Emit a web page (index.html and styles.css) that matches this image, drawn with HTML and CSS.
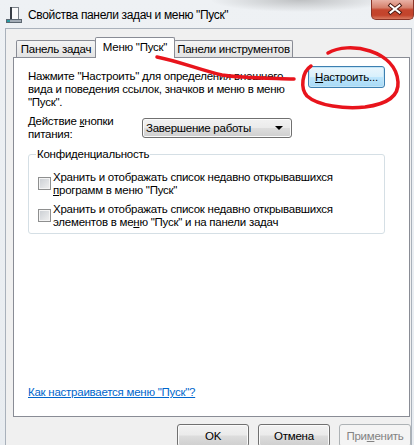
FILE: index.html
```html
<!DOCTYPE html>
<html>
<head>
    <title>Свойства панели задач и меню "Пуск"</title>
    <link rel="stylesheet" href="styles.css">
</head>
<body>
    <div class="window">
        <div class="titlebar">
            <svg class="app-icon" viewBox="0 0 16 16" width="16" height="16">
                <rect x="4.5" y="0.5" width="8" height="12" fill="#fbfbfb" stroke="#7c828a"/>
                <rect x="4" y="0" width="2" height="13" fill="#3a3f47"/>
                <rect x="0.5" y="12.5" width="15" height="3" fill="#a3acb6" stroke="#5d6771"/>
                <rect x="1" y="13" width="3" height="2" fill="#2a9aa3"/>
            </svg>
            <span class="title">Свойства панели задач и меню "Пуск"</span>
            <div class="close-btn">
                <svg viewBox="0 0 43 20" width="43" height="20">
                    <path d="M19.5 6.5 L28.5 13.5 M28.5 6.5 L19.5 13.5" stroke="#4b1a12" stroke-width="4" stroke-linecap="square"/>
                    <path d="M19.5 6.5 L28.5 13.5 M28.5 6.5 L19.5 13.5" stroke="#fff" stroke-width="2" stroke-linecap="square"/>
                </svg>
            </div>
        </div>

        <div class="client">
            <div class="tabs">
                <div class="tab">Панель задач</div>
                <div class="tab active">Меню "Пуск"</div>
                <div class="tab wide">Панели инструментов</div>
            </div>

            <div class="panel">
                <div class="intro">
                    <p class="intro-text">Нажмите "Настроить" для определения внешнего<br>вида и поведения ссылок, значков и меню в меню<br>"Пуск".</p>
                    <button class="btn btn-default"><u>Н</u>астроить...</button>
                </div>

                <div class="power">
                    <div class="power-label">Действие <u>к</u>нопки<br>питания:</div>
                    <div class="combo">
                        <span>Завершение работы</span>
                        <span class="arrow"></span>
                    </div>
                </div>

                <fieldset class="group">
                    <legend>Конфиденциальность</legend>
                    <div class="check">
                        <span class="box"></span>
                        <span>Хранить и отображать список недавно открывавшихся<br><u>п</u>рограмм в меню "Пуск"</span>
                    </div>
                    <div class="check">
                        <span class="box"></span>
                        <span>Хранить и отображать список недавно открывавшихся<br>элементов в ме<u>н</u>ю "Пуск" и на панели задач</span>
                    </div>
                </fieldset>

                <a class="help-link" href="#">Как настраивается меню "Пуск"?</a>
            </div>

            <div class="buttons">
                <button class="btn">OK</button>
                <button class="btn">Отмена</button>
                <button class="btn" disabled>При<u>м</u>енить</button>
            </div>
        </div>

        <!-- hand drawn red marks over the screenshot -->
        <svg class="scribble" viewBox="0 0 414 445" width="414" height="445">
            <path d="M157 57 C178 61 200 70 222 75 C240 78 262 78 294 79" fill="none" stroke="#e8141c" stroke-width="3.5" stroke-linecap="round"/>
            <path d="M328 53 C338 47 355 46 370 51 C385 56 397 66 398 82 C399 96 388 104 365 107 C345 109 318 106 307 96 C300 88 302 72 311 66" fill="none" stroke="#e8141c" stroke-width="3.5" stroke-linecap="round"/>
        </svg>
    </div>
</body>
</html>
```

FILE: styles.css
```css
* {
    box-sizing: border-box;
}

body {
    margin: 0;
    font-family: "Liberation Sans", Arial, sans-serif;
    font-size: 11.5px;
    letter-spacing: -0.25px;
    color: #000;
    background: #fff;
}

.window {
    position: relative;
    width: 414px;
    height: 445px;
    overflow: hidden;
    display: flex;
    flex-direction: column;
    background: linear-gradient(#eef1f4, #e8ecf0);
}

/* title bar */
.titlebar {
    height: 28px;
    display: flex;
    align-items: flex-start;
    flex-shrink: 0;
    background: radial-gradient(ellipse 90px 12px at 300px 0, rgba(80, 80, 80, 0.3), rgba(80, 80, 80, 0));
}

.app-icon {
    margin: 7px 0 0 6px;
}

.title {
    margin: 8px 0 0 6px;
    font-size: 12px;
    letter-spacing: -0.35px;
    line-height: 14px;
    white-space: nowrap;
}

.close-btn {
    margin-left: auto;
    width: 43px;
    height: 20px;
    border: 1px solid #8a3528;
    border-top: none;
    border-radius: 0 0 5px 5px;
    background: linear-gradient(#e9b2a5 0%, #d5806c 40%, #c4452d 52%, #c3442c 80%, #d87a60 100%);
    overflow: hidden;
}

.close-btn svg {
    display: block;
    margin: -1px 0 0 -1px;
}

/* dialog body */
.client {
    flex: 1;
    margin: 0 2px 0 5px;
    padding-top: 8px;
    background: #f0f0f0;
    border: 1px solid #a9b1bb;
    border-bottom: none;
}

.tabs {
    display: flex;
    align-items: flex-end;
    height: 20px;
    margin-left: 10px;
}

.tab {
    width: 80px;
    height: 17px;
    padding-top: 1px;
    line-height: 15px;
    text-align: center;
    white-space: nowrap;
    border: 1px solid #898c95;
    border-bottom: none;
    border-radius: 2px 2px 0 0;
    background: linear-gradient(#f4f4f4, #e3e3e3);
}

.tab.active {
    position: relative;
    z-index: 2;
    height: 21px;
    margin: 0 0 -1px -1px;
    padding-top: 2px;
    background: #fff;
}

.tab.wide {
    width: 119px;
    margin-left: -1px;
}

.panel {
    position: relative;
    z-index: 1;
    height: 360px;
    margin: 0 1px 0 7px;
    padding: 8px 24px 17px 14px;
    display: flex;
    flex-direction: column;
    background: #fff;
    border: 1px solid #898c95;
}

.intro {
    display: flex;
    align-items: flex-start;
}

.intro-text {
    margin: 4px 0 0;
    line-height: 13px;
    white-space: nowrap;
}

.power {
    display: flex;
    align-items: flex-start;
    margin-top: 6px;
}

.power-label {
    width: 114px;
    line-height: 13px;
}

.combo {
    width: 150px;
    height: 20px;
    margin-top: 3px;
    padding: 0 8px 0 3px;
    display: flex;
    align-items: center;
    justify-content: space-between;
    border: 1px solid #707070;
    border-radius: 3px;
    background: linear-gradient(#f2f2f2 0%, #ebebeb 48%, #dddddd 52%, #cfcfcf 100%);
    box-shadow: inset 0 0 0 1px #fbfbfb;
}

.combo .arrow {
    width: 0;
    height: 0;
    border-left: 4px solid transparent;
    border-right: 4px solid transparent;
    border-top: 4px solid #000;
}

.group {
    margin: 7px 0 0;
    padding: 0 7px 4px;
    border: 1px solid #d5dfe5;
    border-radius: 3px;
}

.group legend {
    padding: 0 1px;
    line-height: 13px;
}

.check {
    display: flex;
    align-items: flex-start;
    margin: 6px 0 0 2px;
    line-height: 13px;
    white-space: nowrap;
}

.check:first-of-type {
    margin-top: 10px;
}

.box {
    flex-shrink: 0;
    width: 13px;
    height: 13px;
    margin: 6px 2px 0 0;
    border: 1px solid #8e8f8f;
    background: linear-gradient(135deg, #c9cdd2, #f1f1f1);
    box-shadow: inset 0 0 0 1px #f4f4f4;
}

.help-link {
    margin-top: auto;
    align-self: flex-start;
    line-height: 13px;
    color: #0066cc;
    text-decoration: underline;
}

/* buttons */
.btn {
    width: 72px;
    height: 23px;
    padding: 0;
    font: inherit;
    letter-spacing: inherit;
    color: #000;
    border: 1px solid #707070;
    border-radius: 3px;
    background: linear-gradient(#f2f2f2 0%, #ebebeb 48%, #dddddd 52%, #cfcfcf 100%);
    box-shadow: inset 0 0 0 1px #fbfbfb;
}

.btn-default {
    width: 77px;
    height: 22px;
    margin-left: auto;
    border-color: #3c7fb1;
    background: linear-gradient(#eaf6fd 0%, #d9f0fc 48%, #bee6fd 52%, #a7d9f5 100%);
    box-shadow: inset 0 0 0 1px #c4e5f6;
}

.btn:disabled {
    color: #838383;
    border-color: #adb2b5;
    background: #f4f4f4;
    box-shadow: none;
}

.buttons {
    display: flex;
    justify-content: flex-end;
    gap: 9px;
    margin-top: 7px;
}

.scribble {
    position: absolute;
    top: 0;
    left: 0;
    z-index: 5;
    pointer-events: none;
}
```
